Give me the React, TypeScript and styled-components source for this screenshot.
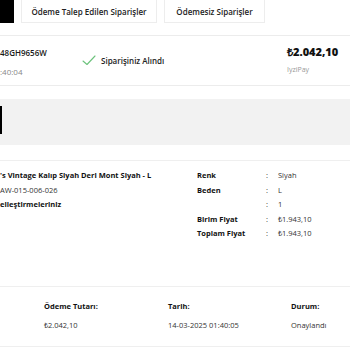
import React from 'react'
import styled, { createGlobalStyle } from 'styled-components'

const GlobalStyle = createGlobalStyle`
  html, body {
    margin: 0;
    padding: 0;
    background: #ffffff;
    overflow: hidden;
  }
  body {
    font-family: 'Open Sans', 'Liberation Sans', sans-serif;
    color: #1a1a1a;
    font-size: 8px;
  }
`

const Page = styled.div`
  width: 350px;
  height: 350px;
  overflow: hidden;
`

const TabBar = styled.div`
  display: flex;
  align-items: stretch;
  gap: 7px;
  height: 23px;
  margin-bottom: 12px;
`

const Tab = styled.div<{ active?: boolean; w: number }>`
  width: ${({ w }) => w}px;
  box-sizing: border-box;
  display: flex;
  align-items: center;
  justify-content: center;
  font-size: 8px;
  font-weight: 600;
  color: ${({ active }) => (active ? '#ffffff' : '#222222')};
  background: ${({ active }) => (active ? '#000000' : '#ffffff')};
  border: 1px solid ${({ active }) => (active ? '#000000' : '#ededed')};
  border-top: none;
  white-space: nowrap;
  overflow: hidden;
`

const OrderRow = styled.div`
  display: grid;
  grid-template-columns: 82px 205px 1fr;
  height: 49px;
  border-top: 1px solid #ececec;
  border-bottom: 1px solid #ececec;
`

const Stack = styled.div<{ top: number; gap: number }>`
  display: flex;
  flex-direction: column;
  padding-top: ${({ top }) => top}px;
  gap: ${({ gap }) => gap}px;
`

const Line = styled.div<{ size?: number; weight?: number; color?: string }>`
  font-size: ${({ size }) => size ?? 8}px;
  font-weight: ${({ weight }) => weight ?? 400};
  color: ${({ color }) => color ?? '#1a1a1a'};
  line-height: ${({ size }) => (size ?? 8) + 4}px;
  white-space: nowrap;
`

const Status = styled.div`
  display: flex;
  align-items: center;
  gap: 5px;
  font-size: 8px;
  font-weight: 600;
  color: #222;
`

const GrayBand = styled.div`
  margin-top: 13px;
  height: 46px;
  background: #f2f2f2;
  display: flex;
  align-items: center;
`

const EdgeButton = styled.div`
  width: 2px;
  height: 28px;
  margin-top: -4px;
  background: #000;
`

const ProductRow = styled.div`
  margin-top: 15px;
  border-top: 1px solid #efefef;
  padding-top: 7px;
  display: grid;
  grid-template-columns: 197px 1fr;
  height: 118px;
`

const ProductInfo = styled.div`
  display: flex;
  flex-direction: column;
`

const Attrs = styled.div`
  display: grid;
  grid-template-columns: 69px 12px 1fr;
  grid-auto-rows: 14.5px;
  align-items: center;
`

const Cell = styled.div<{ bold?: boolean }>`
  font-size: 7.5px;
  font-weight: ${({ bold }) => (bold ? 700 : 400)};
  color: ${({ bold }) => (bold ? '#111' : '#333')};
  line-height: 14.5px;
  white-space: nowrap;
`

const PaymentBlock = styled.div`
  border-top: 1px solid #efefef;
  border-bottom: 1px solid #efefef;
  height: 61px;
  box-sizing: border-box;
  padding: 12px 0 0 44px;
  display: grid;
  grid-template-columns: 124px 123px 1fr;
  grid-template-rows: 14px 14px;
  row-gap: 5px;
`

const CheckIcon = () => (
  <svg width="14" height="11" viewBox="0 0 14 11" fill="none">
    <path d="M1 6 L5 9.5 L13 1" stroke="#6cc27c" strokeWidth="1.1" strokeLinecap="round" strokeLinejoin="round" />
  </svg>
)

export default function App() {
  return (
    <Page>
      <GlobalStyle />
      <TabBar>
        <Tab active w={14} />
        <Tab w={136}>Ödeme Talep Edilen Siparişler</Tab>
        <Tab w={101}>Ödemesiz Siparişler</Tab>
      </TabBar>

      <OrderRow>
        <Stack top={11} gap={7}>
          <Line weight={600}>48GH9656W</Line>
          <Line color="#888">:40:04</Line>
        </Stack>
        <Status>
          <CheckIcon />
          Siparişiniz Alındı
        </Status>
        <Stack top={8} gap={5}>
          <Line size={11} weight={800} color="#111">₺2.042,10</Line>
          <Line size={7} color="#999">IyziPay</Line>
        </Stack>
      </OrderRow>

      <GrayBand>
        <EdgeButton />
      </GrayBand>

      <ProductRow>
        <ProductInfo>
          <Cell bold>'s Vintage Kalıp Siyah Deri Mont Siyah - L</Cell>
          <Cell>AW-015-006-026</Cell>
          <Cell bold>elleştirmeleriniz</Cell>
        </ProductInfo>
        <Attrs>
          <Cell bold>Renk</Cell>
          <Cell>:</Cell>
          <Cell>Siyah</Cell>
          <Cell bold>Beden</Cell>
          <Cell>:</Cell>
          <Cell>L</Cell>
          <Cell bold></Cell>
          <Cell>:</Cell>
          <Cell>1</Cell>
          <Cell bold>Birim Fiyat</Cell>
          <Cell>:</Cell>
          <Cell>₺1.943,10</Cell>
          <Cell bold>Toplam Fiyat</Cell>
          <Cell>:</Cell>
          <Cell>₺1.943,10</Cell>
        </Attrs>
      </ProductRow>

      <PaymentBlock>
        <Cell bold>Ödeme Tutarı:</Cell>
        <Cell bold>Tarih:</Cell>
        <Cell bold>Durum:</Cell>
        <Cell>₺2.042,10</Cell>
        <Cell>14-03-2025 01:40:05</Cell>
        <Cell>Onaylandı</Cell>
      </PaymentBlock>
    </Page>
  )
}
